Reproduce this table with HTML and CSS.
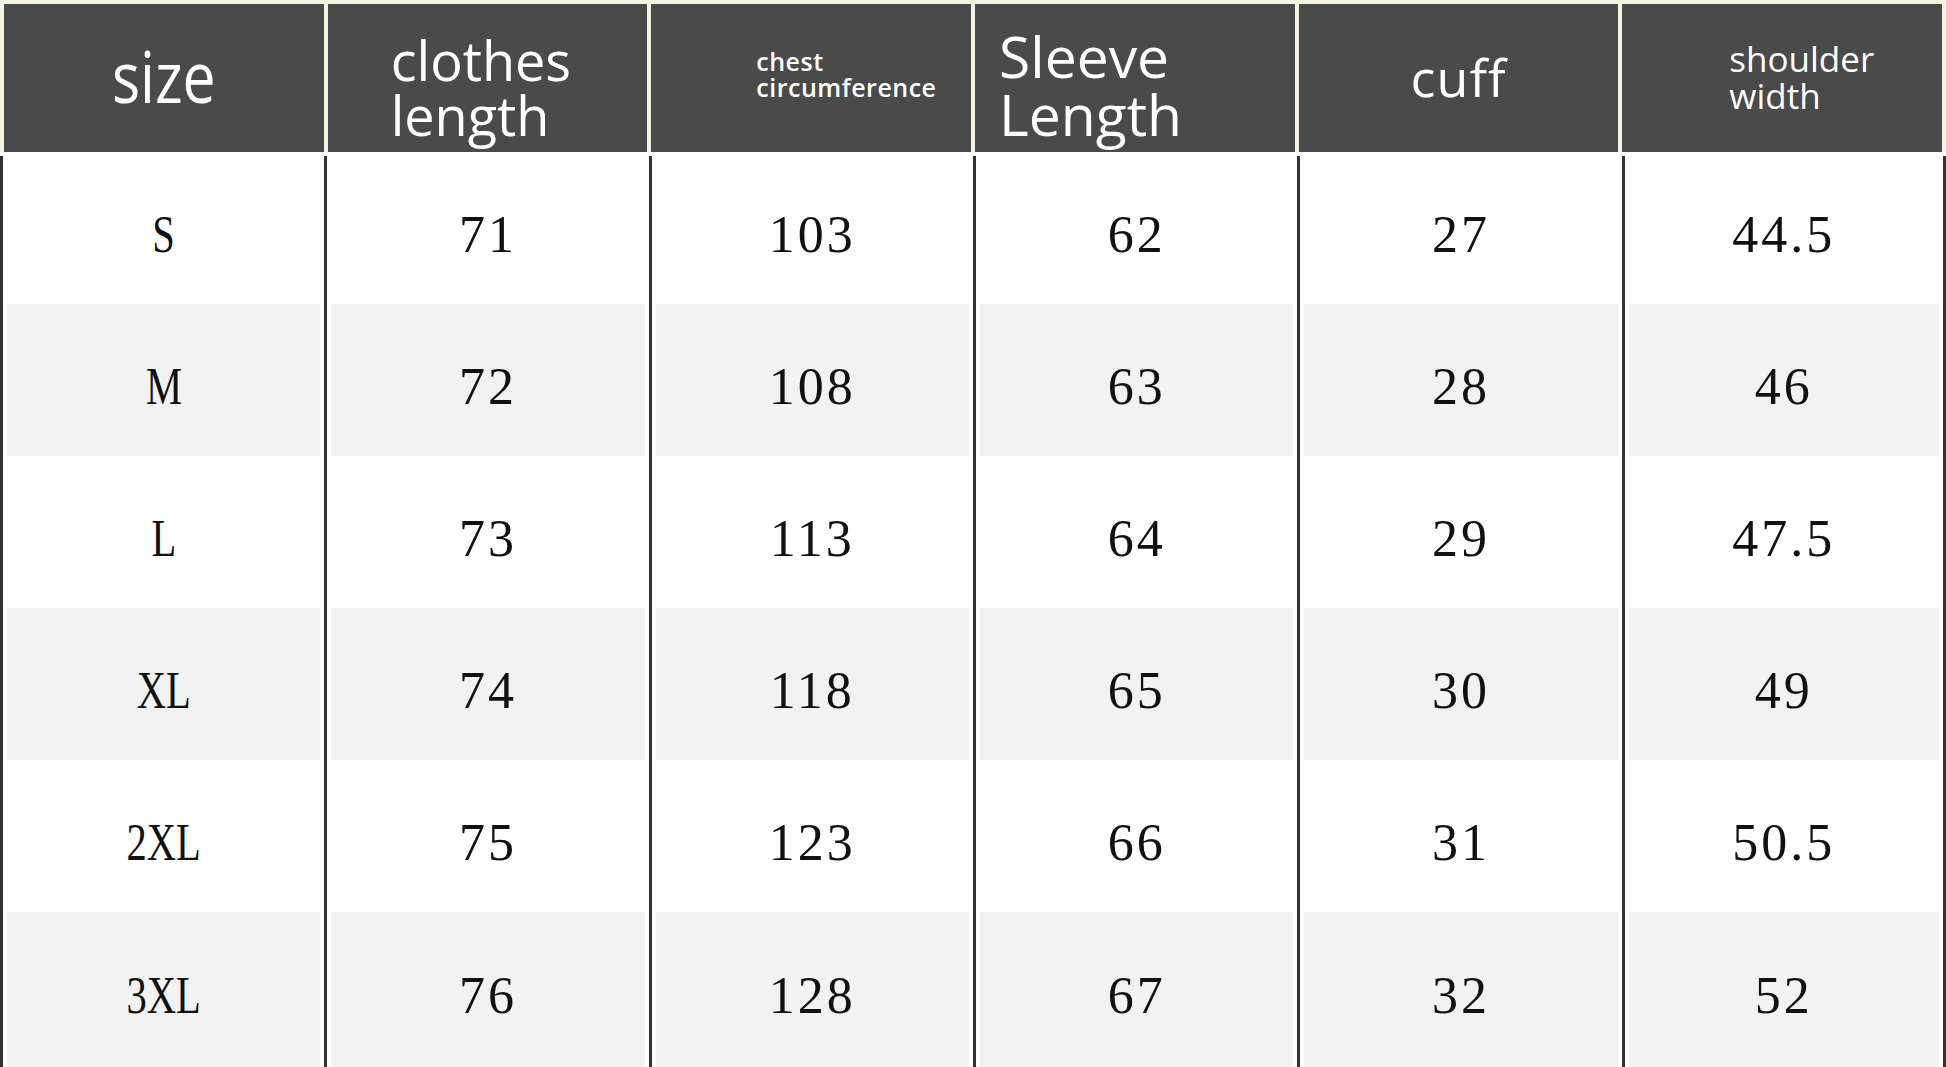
FILE: index.html
```html
<!DOCTYPE html>
<html lang="en">
<head>
<meta charset="utf-8">
<title>Size chart</title>
<link rel="stylesheet" href="styles.css">
</head>
<body>
<div class="chart">
  <div class="head">
    <div class="hcell h-size"><span class="lbl">size</span></div>
    <div class="hcell h-clothes"><div class="lbl">clothes<br>length</div></div>
    <div class="hcell h-chest"><div class="lbl">chest<br>circumference</div></div>
    <div class="hcell h-sleeve"><div class="lbl">Sleeve<br>Length</div></div>
    <div class="hcell h-cuff"><span class="lbl">cuff</span></div>
    <div class="hcell h-shoulder"><div class="lbl">shoulder<br>width</div></div>
  </div>
  <div class="body">
    <div class="row first">
      <div class="cell"><div class="fill"><span class="val sz">S</span></div></div>
      <div class="cell"><div class="fill"><span class="val">71</span></div></div>
      <div class="cell"><div class="fill"><span class="val">103</span></div></div>
      <div class="cell"><div class="fill"><span class="val">62</span></div></div>
      <div class="cell"><div class="fill"><span class="val">27</span></div></div>
      <div class="cell"><div class="fill"><span class="val">44.5</span></div></div>
    </div>
    <div class="row alt">
      <div class="cell"><div class="fill"><span class="val sz">M</span></div></div>
      <div class="cell"><div class="fill"><span class="val">72</span></div></div>
      <div class="cell"><div class="fill"><span class="val">108</span></div></div>
      <div class="cell"><div class="fill"><span class="val">63</span></div></div>
      <div class="cell"><div class="fill"><span class="val">28</span></div></div>
      <div class="cell"><div class="fill"><span class="val">46</span></div></div>
    </div>
    <div class="row">
      <div class="cell"><div class="fill"><span class="val sz">L</span></div></div>
      <div class="cell"><div class="fill"><span class="val">73</span></div></div>
      <div class="cell"><div class="fill"><span class="val">113</span></div></div>
      <div class="cell"><div class="fill"><span class="val">64</span></div></div>
      <div class="cell"><div class="fill"><span class="val">29</span></div></div>
      <div class="cell"><div class="fill"><span class="val">47.5</span></div></div>
    </div>
    <div class="row alt">
      <div class="cell"><div class="fill"><span class="val sz">XL</span></div></div>
      <div class="cell"><div class="fill"><span class="val">74</span></div></div>
      <div class="cell"><div class="fill"><span class="val">118</span></div></div>
      <div class="cell"><div class="fill"><span class="val">65</span></div></div>
      <div class="cell"><div class="fill"><span class="val">30</span></div></div>
      <div class="cell"><div class="fill"><span class="val">49</span></div></div>
    </div>
    <div class="row">
      <div class="cell"><div class="fill"><span class="val sz">2XL</span></div></div>
      <div class="cell"><div class="fill"><span class="val">75</span></div></div>
      <div class="cell"><div class="fill"><span class="val">123</span></div></div>
      <div class="cell"><div class="fill"><span class="val">66</span></div></div>
      <div class="cell"><div class="fill"><span class="val">31</span></div></div>
      <div class="cell"><div class="fill"><span class="val">50.5</span></div></div>
    </div>
    <div class="row alt last">
      <div class="cell"><div class="fill"><span class="val sz">3XL</span></div></div>
      <div class="cell"><div class="fill"><span class="val">76</span></div></div>
      <div class="cell"><div class="fill"><span class="val">128</span></div></div>
      <div class="cell"><div class="fill"><span class="val">67</span></div></div>
      <div class="cell"><div class="fill"><span class="val">32</span></div></div>
      <div class="cell"><div class="fill"><span class="val">52</span></div></div>
    </div>
  </div>
</div>
</body>
</html>
```

FILE: styles.css
```css
html, body {
  margin: 0;
  padding: 0;
  background: #ffffff;
}

.chart {
  width: 1946px;
  height: 1067px;
  overflow: hidden;
  background: #ffffff;
}

/* ---------- header ---------- */
.head {
  display: grid;
  grid-template-columns: repeat(6, 1fr);
  gap: 4px;
  padding: 4px 4px 0;
  height: 152px;
  box-sizing: border-box;
  background: #f7f3e3;
}

.hcell {
  background: #4a4a4a;
  color: #ffffff;
  font-family: "Open Sans", "Noto Sans", sans-serif;
  display: flex;
  align-items: flex-start;
  box-sizing: border-box;
}

.lbl {
  display: inline-block;
}

.h-size {
  justify-content: center;
  padding-top: 47px;
  font-size: 59px;
  line-height: 58px;
}
.h-size .lbl {
  transform: scaleY(1.22);
  transform-origin: 50% 52px;
}

.h-clothes {
  padding: 29px 0 0 63px;
  font-size: 54px;
  line-height: 55px;
}

.h-chest {
  padding: 44px 0 0 105px;
  font-size: 25px;
  line-height: 26px;
  letter-spacing: 0.5px;
  font-weight: 600;
}

.h-sleeve {
  padding: 23px 0 0 24px;
  font-size: 57px;
  line-height: 58px;
}

.h-cuff {
  justify-content: center;
  padding-top: 47px;
  font-size: 52px;
  line-height: 52px;
  letter-spacing: 1px;
}

.h-shoulder {
  padding: 36px 0 0 107px;
  font-size: 35px;
  line-height: 37px;
}

/* ---------- body ---------- */
.body {
  margin-top: 4px;
}

.row {
  display: grid;
  grid-template-columns: repeat(6, 1fr);
  height: 152px;
}
.row.first {
  height: 148px;
}
.row.last {
  height: 155px;
}

.cell {
  border-left: 3px solid #333333;
  padding: 0 4px;
  box-sizing: border-box;
  min-width: 0;
}
.cell:last-child {
  border-right: 3px solid #333333;
}

.fill {
  height: 100%;
  box-sizing: border-box;
  padding-top: 14px;
  display: flex;
  align-items: center;
  justify-content: center;
  font-family: "Liberation Serif", "Times New Roman", serif;
  font-size: 52px;
  line-height: 52px;
  color: #111111;
}
.row.first .fill {
  padding-top: 10px;
}
.row.last .fill {
  padding-top: 13px;
}
.row.alt .fill {
  background: #f2f2f2;
}

.val {
  display: inline-block;
  letter-spacing: 3px;
}
.val.sz {
  letter-spacing: 0;
  transform: scaleX(0.78);
}
```
